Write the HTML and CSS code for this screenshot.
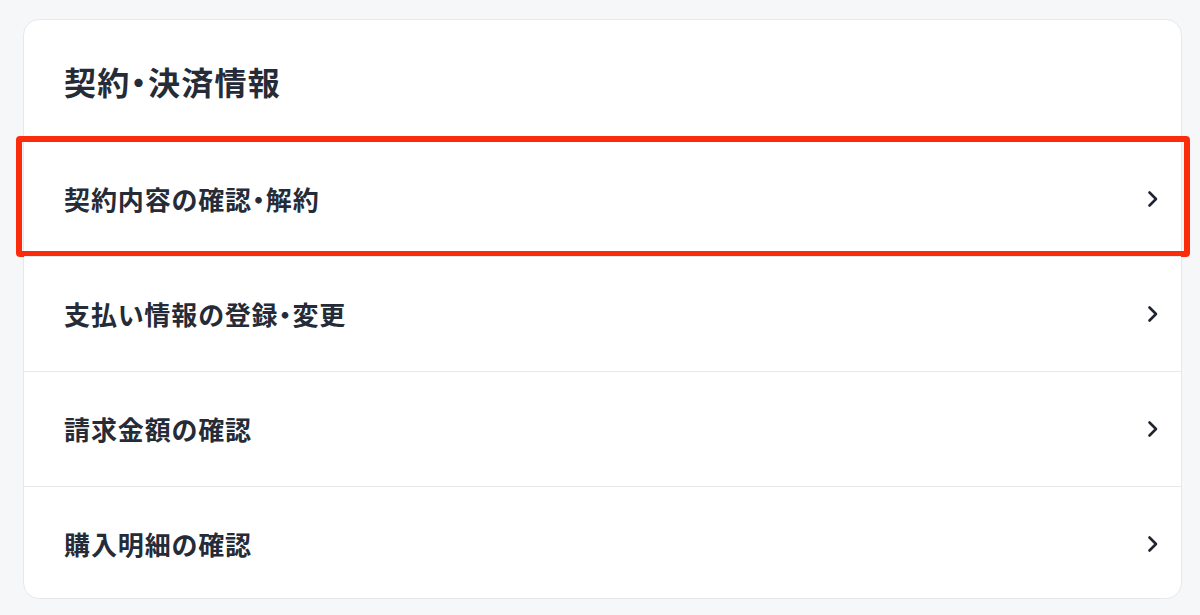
FILE: index.html
```html
<!DOCTYPE html>
<html lang="ja">
<head>
<meta charset="utf-8">
<link rel="stylesheet" href="styles.css">
</head>
<body>
<section class="card">
  <h2 class="card-title">契約・決済情報</h2>
  <ul class="menu">
    <li class="menu-item highlighted">
      <span class="label">契約内容の確認・解約</span>
      <svg class="chev" width="12" height="18" viewBox="0 0 12 18"><path d="M2.5 2.5 L9 9 L2.5 15.5" fill="none" stroke="currentColor" stroke-width="2.6" stroke-linecap="round" stroke-linejoin="round"/></svg>
    </li>
    <li class="menu-item">
      <span class="label">支払い情報の登録・変更</span>
      <svg class="chev" width="12" height="18" viewBox="0 0 12 18"><path d="M2.5 2.5 L9 9 L2.5 15.5" fill="none" stroke="currentColor" stroke-width="2.6" stroke-linecap="round" stroke-linejoin="round"/></svg>
    </li>
    <li class="menu-item">
      <span class="label">請求金額の確認</span>
      <svg class="chev" width="12" height="18" viewBox="0 0 12 18"><path d="M2.5 2.5 L9 9 L2.5 15.5" fill="none" stroke="currentColor" stroke-width="2.6" stroke-linecap="round" stroke-linejoin="round"/></svg>
    </li>
    <li class="menu-item">
      <span class="label">購入明細の確認</span>
      <svg class="chev" width="12" height="18" viewBox="0 0 12 18"><path d="M2.5 2.5 L9 9 L2.5 15.5" fill="none" stroke="currentColor" stroke-width="2.6" stroke-linecap="round" stroke-linejoin="round"/></svg>
    </li>
  </ul>
</section>
</body>
</html>
```
FILE: styles.css
```css
html, body {
  margin: 0;
  padding: 0;
  background: #f6f7f9;
}
body {
  padding: 19px 18px 0 23px;
  font-family: "Noto Sans CJK JP", "Noto Sans", sans-serif;
  color: #252b37;
  font-feature-settings: "palt";
}
.card {
  background: #ffffff;
  border: 1px solid #e6e8ec;
  border-radius: 16px;
  height: 580px;
  box-sizing: border-box;
}
.card-title {
  margin: 0;
  height: 122px;
  display: flex;
  align-items: center;
  padding-left: 40px;
  font-size: 32px;
  font-weight: 700;
  letter-spacing: 1.3px;
  line-height: 1;
}
.menu {
  list-style: none;
  margin: 0;
  padding: 0;
}
.menu-item {
  position: relative;
  height: 114px;
  display: flex;
  align-items: center;
  justify-content: space-between;
  padding: 0 22px 0 40px;
  border-top: 1px solid #e6e8ec;
}
.menu-item:first-child {
  border-top: 0;
}
.label {
  font-size: 26px;
  font-weight: 700;
  letter-spacing: 0.9px;
  line-height: 1;
}
.chev {
  color: #1f2430;
}
.highlighted::after {
  content: "";
  position: absolute;
  left: -8px;
  right: -9px;
  top: -6px;
  bottom: -1px;
  border: 6px solid #fa2c0c;
  border-radius: 4px;
  pointer-events: none;
}
```
